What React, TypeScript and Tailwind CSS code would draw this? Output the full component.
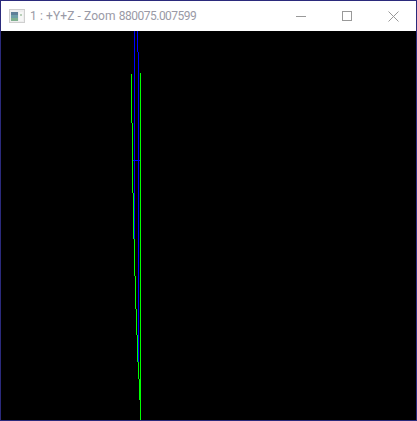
const blue: number[][] = [
  [134, 31, 239],
  [137, 31, 52],
  [138, 52, 362],
];
const green: number[][] = [
  [131, 74, 123],
  [132, 123, 193],
  [133, 193, 239],
  [134, 239, 276],
  [135, 276, 309],
  [136, 309, 335],
  [137, 335, 362],
  [138, 362, 379],
  [139, 379, 400],
  [140, 73, 420],
];
const frameBits: { x: number; y: number; w?: number; h?: number; c: string }[] = [
  { x: 90, y: 0, w: 2, c: "#1f8f9f" },
  { x: 114, y: 0, w: 2, c: "#7fa040" },
  { x: 145, y: 0, w: 3, c: "#1f8f9f" },
  { x: 153, y: 0, w: 3, c: "#1f8f9f" },
  { x: 90, y: 420, w: 2, c: "#1f8f9f" },
  { x: 140, y: 420, c: "#00ff00" },
  { x: 145, y: 420, w: 3, c: "#1f8f9f" },
  { x: 153, y: 420, w: 3, c: "#1f8f9f" },
  { x: 0, y: 77, h: 16, c: "#1f8f7f" },
];

function Seg({ x, y, w = 1, h = 1, c }: { x: number; y: number; w?: number; h?: number; c: string }) {
  return <rect x={x} y={y} width={w} height={h} fill={c} />;
}

export default function App() {
  return (
    <div className="relative flex h-[421px] w-[417px] flex-col overflow-hidden border border-[#2b2a7c] bg-black">
      <div className="flex h-[30px] shrink-0 items-center bg-white font-['Roboto',sans-serif]">
        <svg width="16" height="14" viewBox="0 0 16 14" className="ml-[8px] shrink-0" shapeRendering="crispEdges">
          <rect x="0" y="0" width="16" height="14" fill="#cfcfcf" />
          <rect x="1" y="1" width="14" height="12" fill="#eeeeee" />
          <rect x="2" y="3" width="7" height="9" fill="#6f9fa8" />
          <rect x="2" y="3" width="7" height="3" fill="#5f7f98" />
          <rect x="2" y="9" width="7" height="3" fill="#80b090" />
          <rect x="10" y="3" width="4" height="9" fill="#f6f6f6" />
          <rect x="11" y="5" width="2" height="2" fill="#b8d0b8" />
        </svg>
        <span className="ml-[5px] whitespace-pre text-[12px] leading-none text-[#9a9aa6]">
          <span className="tracking-[0.1px]">1 : +Y+Z - Zoom </span>
          <span className="tracking-[-0.5px]">880075.007599</span>
        </span>
        <div className="ml-auto flex h-full items-center">
          <div className="flex h-full w-[46px] items-center justify-center">
            <div className="h-px w-[10px] bg-[#999999]" />
          </div>
          <div className="flex h-full w-[46px] items-center justify-center">
            <div className="h-[10px] w-[10px] border border-[#999999]" />
          </div>
          <div className="flex h-full w-[46px] items-center justify-center">
            <svg width="11" height="11" viewBox="0 0 11 11">
              <path d="M0.5 0.5 L10.5 10.5 M10.5 0.5 L0.5 10.5" stroke="#999999" strokeWidth="1" fill="none" />
            </svg>
          </div>
        </div>
      </div>
      <div className="min-h-0 flex-1 bg-black">
        <svg className="block h-full w-full" viewBox="1 31 415 389" shapeRendering="crispEdges">
          {blue.map(([x, a, b]) => (
            <Seg key={`b${x}${a}`} x={x} y={a} h={b - a} c="#0000ff" />
          ))}
          {green.map(([x, a, b]) => (
            <Seg key={`g${x}${a}`} x={x} y={a} h={b - a} c="#00ff00" />
          ))}
          <Seg x={133} y={160} w={7} c="#0000ff" />
        </svg>
      </div>
      <svg
        className="pointer-events-none absolute -left-px -top-px h-[421px] w-[417px]"
        viewBox="0 0 417 421"
        shapeRendering="crispEdges"
      >
        {frameBits.map((b) => (
          <Seg key={`${b.x}-${b.y}`} {...b} />
        ))}
      </svg>
    </div>
  );
}
